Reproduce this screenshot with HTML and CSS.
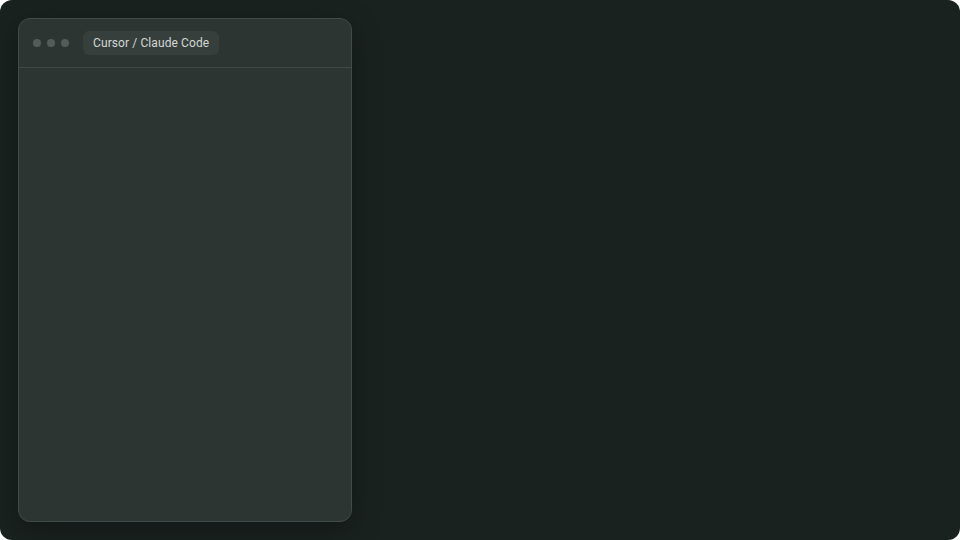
FILE: index.html
```html
<!DOCTYPE html>
<html>
<head>
<meta charset="utf-8">
<link rel="stylesheet" href="styles.css">
</head>
<body>
<div class="page">
  <div class="window">
    <div class="titlebar">
      <div class="dots"><span class="dot"></span><span class="dot"></span><span class="dot"></span></div>
      <div class="tab">Cursor / Claude Code</div>
    </div>
    <div class="content"></div>
  </div>
</div>
</body>
</html>
```
FILE: styles.css
```css
html, body { margin: 0; padding: 0; background: #ffffff; }
.page {
  width: 960px; height: 540px; box-sizing: border-box;
  background: #1a2220; border-radius: 12px;
  padding: 18px; display: flex; align-items: flex-start;
}
.window {
  width: 334px; height: 504px; box-sizing: border-box;
  background: #2c3532; border: 1px solid #414b48; border-radius: 12px;
  box-shadow: 0 8px 28px rgba(0,0,0,0.35);
  display: flex; flex-direction: column; overflow: hidden;
}
.titlebar {
  height: 49px; box-sizing: border-box; flex: none;
  border-bottom: 1px solid #414a47;
  display: flex; align-items: center; padding: 0 0 0 14px; gap: 14px;
}
.dots { display: flex; gap: 6px; }
.dot { width: 8px; height: 8px; border-radius: 50%; background: #535c59; display: block; }
.tab {
  height: 24px; padding: 0 10px; border-radius: 6px; background: #363f3c;
  display: flex; align-items: center;
  font-family: Roboto, "Liberation Sans", sans-serif; font-size: 12px; letter-spacing: 0.1px; color: #d3d7d5;
}
.content { flex: 1; }
```
